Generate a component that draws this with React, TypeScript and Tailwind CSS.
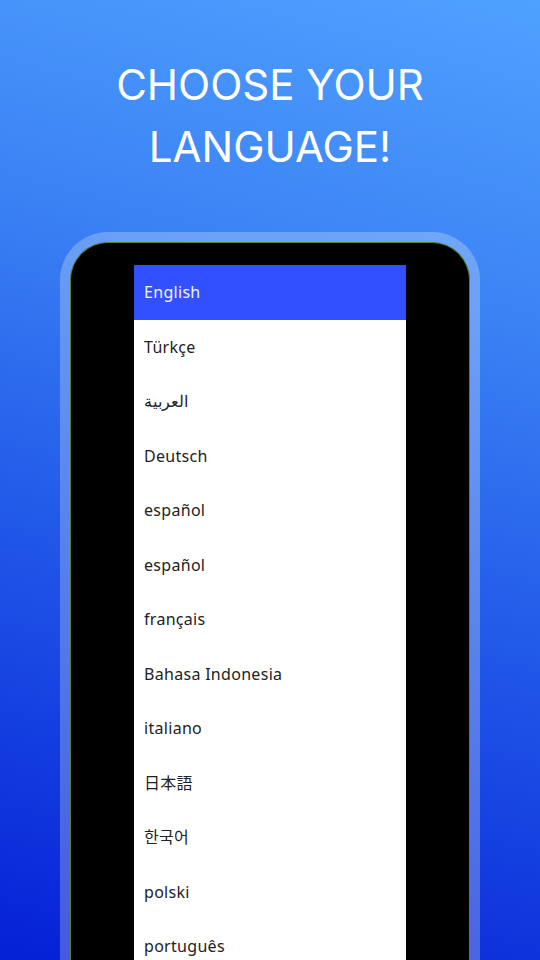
const languages = [
  'English',
  'Türkçe',
  'العربية',
  'Deutsch',
  'español',
  'español',
  'français',
  'Bahasa Indonesia',
  'italiano',
  '日本語',
  '한국어',
  'polski',
  'português'
];

export default function App() {
  return (
    <div className="relative h-[960px] w-[540px] overflow-hidden bg-[linear-gradient(195deg,#4fa1ff_0%,#3b82f4_30%,#2158e8_60%,#0520d6_100%)]">
      <h1 className="pt-[54px] text-center font-['Inter','Liberation_Sans',sans-serif] text-[42px] font-normal leading-[62px] text-white">
        CHOOSE YOUR
        <br />
        LANGUAGE!
      </h1>

      <div className="mx-auto mt-[54px] w-[420px] rounded-t-[48px] border-[10px] border-b-0 border-white/25">
        <div className="h-[760px] rounded-t-[38px] border border-b-0 border-[#5f7f2a] bg-black px-[63px] pt-[22px]">
          <ul className="bg-white font-['Noto_Sans','Noto_Sans_CJK_JP','Noto_Sans_CJK_KR',sans-serif] text-[16px] tracking-[0.3px] text-[#222]">
            {languages.map((lang, i) => (
              <li
                key={i}
                className={
                  i === 0
                    ? 'flex h-[54.5px] items-center bg-[#3250fd] pl-[10px] text-[#f2f5ff]'
                    : 'flex h-[54.5px] items-center pl-[10px]'
                }
              >
                {lang}
              </li>
            ))}
          </ul>
        </div>
      </div>
    </div>
  );
}
